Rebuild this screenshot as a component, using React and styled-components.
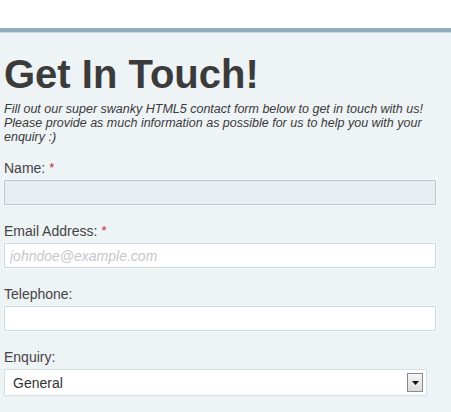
import React from 'react';
import styled, { createGlobalStyle } from 'styled-components';

const GlobalStyle = createGlobalStyle`
  html, body {
    margin: 0;
    padding: 0;
    background: #eef3f6;
    font-family: "Liberation Sans", Arial, sans-serif;
  }
`;

const FIELDS = [
  { id: 'name', label: 'Name:', required: true, focus: true },
  { id: 'email', label: 'Email Address:', required: true, placeholder: 'johndoe@example.com' },
  { id: 'telephone', label: 'Telephone:' },
];

const App = () => (
  <>
    <GlobalStyle />
    <Page>
      <TopBar />
      <Content>
        <Heading>Get In Touch!</Heading>
        <Intro>
          Fill out our super swanky HTML5 contact form below to get in touch with us!
          Please provide as much information as possible for us to help you with your
          enquiry :)
        </Intro>
        <Form onSubmit={e => e.preventDefault()}>
          {FIELDS.map(field => (
            <Field key={field.id}>
              <Label htmlFor={field.id}>
                {field.label}
                {field.required && <Required>*</Required>}
              </Label>
              <TextInput
                id={field.id}
                type="text"
                placeholder={field.placeholder}
                autoFocus={field.focus} />
            </Field>
          ))}
          <Field>
            <Label htmlFor="enquiry">Enquiry:</Label>
            <SelectBox>
              <Select id="enquiry" defaultValue="general">
                <option value="general">General</option>
                <option value="sales">Sales</option>
                <option value="support">Support</option>
              </Select>
              <DropButton>
                <svg width="7" height="4" viewBox="0 0 7 4">
                  <path d="M0 0 H7 L3.5 4 Z" fill="#111" />
                </svg>
              </DropButton>
            </SelectBox>
          </Field>
        </Form>
      </Content>
    </Page>
  </>
);

const Page = styled.div`
  min-height: 412px;
  background: #eef3f6;
`;

const TopBar = styled.header`
  height: 28px;
  background: #ffffff;
  border-bottom: 4px solid #8fb0bc;
  box-shadow: 0 1px 0 #c9dbe2;
`;

const Content = styled.main`
  padding: 0 4px;
  display: flex;
  flex-direction: column;
`;

const Heading = styled.h1`
  margin: 20px 0 0;
  font-size: 40px;
  line-height: 45px;
  font-weight: bold;
  color: #3b3b3b;
`;

const Intro = styled.p`
  margin: 5px 0 0;
  max-width: 420px;
  font-size: 12.5px;
  line-height: 14px;
  font-style: italic;
  color: #3a3a3a;
`;

const Form = styled.form`
  margin-top: 16px;
  display: flex;
  flex-direction: column;
  gap: 18px;
`;

const Field = styled.div`
  display: flex;
  flex-direction: column;
  gap: 4px;
`;

const Label = styled.label`
  font-size: 14px;
  line-height: 16px;
  color: #444;
`;

const Required = styled.span`
  color: #c0293a;
  font-size: 13px;
  margin-left: 4px;
  vertical-align: 1px;
`;

const TextInput = styled.input`
  box-sizing: border-box;
  width: 432px;
  height: 25px;
  margin: 0;
  padding: 0 5px;
  border: 1px solid #ccd9de;
  box-shadow: 0 0 0 1px #f7fafb;
  background: #ffffff;
  font-family: inherit;
  font-size: 14px;
  color: #333;
  outline: none;

  &::placeholder {
    color: #c3c8cb;
    font-style: italic;
  }

  &:focus {
    background: #e8eff2;
    border-color: #bac9cf;
    caret-color: #333;
  }
`;

const SelectBox = styled.div`
  box-sizing: border-box;
  width: 423px;
  height: 27px;
  display: flex;
  align-items: center;
  padding-right: 3px;
  border: 1px solid #d6e0e4;
  background: #ffffff;
`;

const Select = styled.select`
  flex: 1;
  height: 100%;
  padding: 0 0 0 8px;
  border: none;
  background: transparent;
  appearance: none;
  font-family: inherit;
  font-size: 14px;
  color: #333;
  outline: none;
`;

const DropButton = styled.span`
  box-sizing: border-box;
  width: 16px;
  height: 19px;
  display: flex;
  align-items: center;
  justify-content: center;
  border: 1px solid #8a8a8a;
  background: linear-gradient(#f4f4f4, #dcdcdc);
`;

export default App;
